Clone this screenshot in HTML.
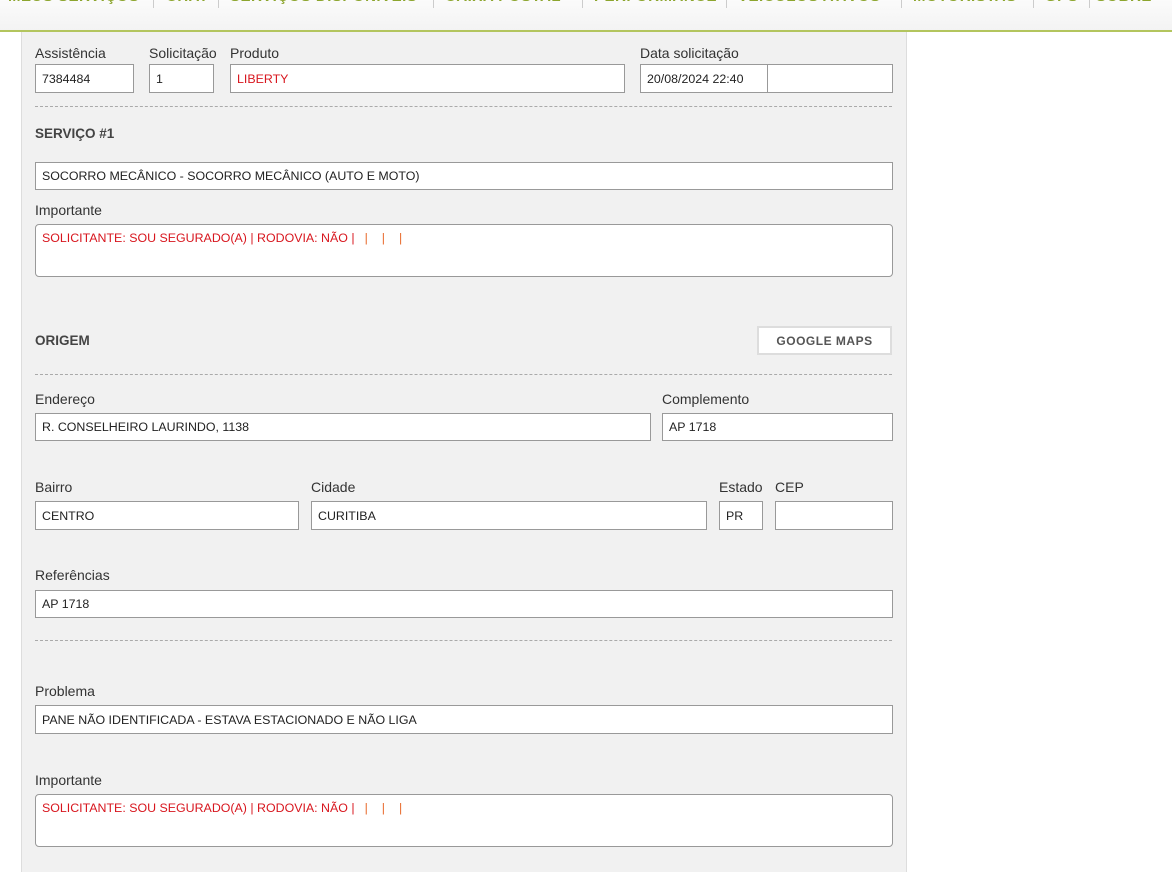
<!DOCTYPE html>
<html><head><meta charset="utf-8"><style>
body{margin:0;width:1172px;height:869px;overflow:hidden;background:#fff;font-family:"Liberation Sans",Tahoma,sans-serif;position:relative}
.nav{position:absolute;left:0;top:0;width:1172px;height:30px;background:linear-gradient(#fbfbfb,#f3f3f3);border-bottom:2px solid #b3c55e}
.nav span{position:absolute;top:-12px;font-size:15px;font-weight:bold;color:#8ca52e;white-space:nowrap;letter-spacing:.5px}
.nav i{position:absolute;top:0;height:8px;border-left:1px solid #ccc}
.panel{position:absolute;left:21px;top:32px;width:884px;height:840px;background:#f1f1f1;border-left:1px solid #ddd;border-right:1px solid #ddd}
.l{position:absolute;font-size:14px;color:#333}
.in{position:absolute;box-sizing:border-box;background:#fff;border:1px solid #999;font-size:12.4px;color:#222;padding:0 6px;display:flex;align-items:center;white-space:nowrap}
.ta{align-items:flex-start;padding-top:6px;border-radius:4px;border-color:#999}
.red{color:#d8161e}
.h{position:absolute;font-size:13.5px;font-weight:bold;color:#444}
.d{position:absolute;left:35px;width:857px;border-top:1px dashed #aaa}
.btn{position:absolute;left:757px;top:326px;width:135px;height:29px;box-sizing:border-box;background:#fff;border:2px solid #ddd;font-size:12px;font-weight:bold;color:#555;display:flex;align-items:center;justify-content:center;letter-spacing:.5px}
.o{color:#e8692a;display:inline-block;margin-left:14px}
</style></head><body>
<div class="nav">
<span style="left:8px">MEUS SERVIÇOS</span><i style="left:153px"></i>
<span style="left:166px">CHAT</span><i style="left:218px"></i>
<span style="left:230px">SERVIÇOS DISPONÍVEIS</span><i style="left:433px"></i>
<span style="left:445px">CAIXA POSTAL</span><i style="left:582px"></i>
<span style="left:594px">PERFORMANCE</span><i style="left:726px"></i>
<span style="left:738px">VEÍCULOS ATIVOS</span><i style="left:901px"></i>
<span style="left:913px">MOTORISTAS</span><i style="left:1033px"></i>
<span style="left:1045px">GPS</span><i style="left:1089px"></i>
<span style="left:1096px">SOBRE</span>
</div>
<div class="panel"></div>
<div class="l" style="left:35px;top:45px">Assistência</div>
<div class="l" style="left:149px;top:45px">Solicitação</div>
<div class="l" style="left:230px;top:45px">Produto</div>
<div class="l" style="left:640px;top:45px">Data solicitação</div>
<div class="in" style="left:35px;top:64px;width:99px;height:29px">7384484</div>
<div class="in" style="left:149px;top:64px;width:65px;height:29px">1</div>
<div class="in red" style="left:230px;top:64px;width:395px;height:29px">LIBERTY</div>
<div class="in" style="left:640px;top:64px;width:128px;height:29px">20/08/2024 22:40</div>
<div class="in" style="left:767px;top:64px;width:126px;height:29px"></div>
<div class="d" style="top:106px"></div>
<div class="h" style="left:35px;top:126px">SERVIÇO #1</div>
<div class="in" style="left:35px;top:162px;width:858px;height:28px">SOCORRO MECÂNICO - SOCORRO MECÂNICO (AUTO E MOTO)</div>
<div class="l" style="left:35px;top:202px">Importante</div>
<div class="in ta red" style="left:35px;top:224px;width:858px;height:53px"><span>SOLICITANTE: SOU SEGURADO(A) | RODOVIA: NÃO |<span class="o" style="margin-left:10px">|</span><span class="o">|</span><span class="o">|</span></span></div>
<div class="h" style="left:35px;top:333px">ORIGEM</div>
<div class="btn">GOOGLE MAPS</div>
<div class="d" style="top:374px"></div>
<div class="l" style="left:35px;top:391px">Endereço</div>
<div class="l" style="left:662px;top:391px">Complemento</div>
<div class="in" style="left:35px;top:413px;width:616px;height:28px">R. CONSELHEIRO LAURINDO, 1138</div>
<div class="in" style="left:662px;top:413px;width:231px;height:28px">AP 1718</div>
<div class="l" style="left:35px;top:479px">Bairro</div>
<div class="l" style="left:311px;top:479px">Cidade</div>
<div class="l" style="left:719px;top:479px">Estado</div>
<div class="l" style="left:775px;top:479px">CEP</div>
<div class="in" style="left:35px;top:501px;width:264px;height:29px">CENTRO</div>
<div class="in" style="left:311px;top:501px;width:396px;height:29px">CURITIBA</div>
<div class="in" style="left:719px;top:501px;width:44px;height:29px">PR</div>
<div class="in" style="left:775px;top:501px;width:118px;height:29px"></div>
<div class="l" style="left:35px;top:567px">Referências</div>
<div class="in" style="left:35px;top:590px;width:858px;height:28px">AP 1718</div>
<div class="d" style="top:640px"></div>
<div class="l" style="left:35px;top:683px">Problema</div>
<div class="in" style="left:35px;top:705px;width:858px;height:29px">PANE NÃO IDENTIFICADA - ESTAVA ESTACIONADO E NÃO LIGA</div>
<div class="l" style="left:35px;top:772px">Importante</div>
<div class="in ta red" style="left:35px;top:794px;width:858px;height:53px"><span>SOLICITANTE: SOU SEGURADO(A) | RODOVIA: NÃO |<span class="o" style="margin-left:10px">|</span><span class="o">|</span><span class="o">|</span></span></div>
</body></html>
